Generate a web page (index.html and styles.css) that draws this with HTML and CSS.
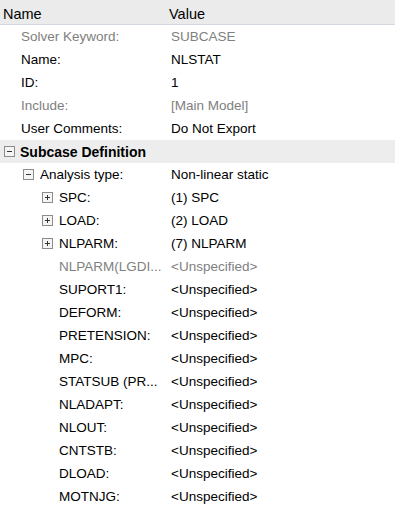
FILE: index.html
```html
<!DOCTYPE html>
<html lang="en">
<head>
    <meta charset="UTF-8">
    <title>Subcase properties</title>
    <link rel="stylesheet" href="styles.css">
</head>
<body>
    <div class="grid">
        <div class="head">
            <div class="cell name">Name</div>
            <div class="cell value">Value</div>
        </div>

        <div class="row dim"><div class="cell name lvl0">Solver Keyword:</div><div class="cell value">SUBCASE</div></div>
        <div class="row"><div class="cell name lvl0">Name:</div><div class="cell value">NLSTAT</div></div>
        <div class="row"><div class="cell name lvl0">ID:</div><div class="cell value">1</div></div>
        <div class="row dim"><div class="cell name lvl0">Include:</div><div class="cell value">[Main Model]</div></div>
        <div class="row"><div class="cell name lvl0">User Comments:</div><div class="cell value">Do Not Export</div></div>

        <div class="row group">
            <div class="cell name grp">
                <svg class="tog" width="11" height="11" viewBox="0 0 11 11"><rect x="0.5" y="0.5" width="10" height="10" fill="#f4f4f4" stroke="#8c8c8c"/><path d="M3 5.5h5" stroke="#333"/></svg>
                Subcase Definition
            </div>
        </div>

        <div class="row">
            <div class="cell name lvl1">
                <svg class="tog" width="11" height="11" viewBox="0 0 11 11"><rect x="0.5" y="0.5" width="10" height="10" fill="#f4f4f4" stroke="#8c8c8c"/><path d="M3 5.5h5" stroke="#333"/></svg>
                <span>Analysis type:</span>
            </div>
            <div class="cell value">Non-linear static</div>
        </div>
        <div class="row">
            <div class="cell name lvl2">
                <svg class="tog" width="11" height="11" viewBox="0 0 11 11"><rect x="0.5" y="0.5" width="10" height="10" fill="#f4f4f4" stroke="#8c8c8c"/><path d="M3 5.5h5M5.5 3v5" stroke="#333"/></svg>
                <span>SPC:</span>
            </div>
            <div class="cell value">(1) SPC</div>
        </div>
        <div class="row">
            <div class="cell name lvl2">
                <svg class="tog" width="11" height="11" viewBox="0 0 11 11"><rect x="0.5" y="0.5" width="10" height="10" fill="#f4f4f4" stroke="#8c8c8c"/><path d="M3 5.5h5M5.5 3v5" stroke="#333"/></svg>
                <span>LOAD:</span>
            </div>
            <div class="cell value">(2) LOAD</div>
        </div>
        <div class="row">
            <div class="cell name lvl2">
                <svg class="tog" width="11" height="11" viewBox="0 0 11 11"><rect x="0.5" y="0.5" width="10" height="10" fill="#f4f4f4" stroke="#8c8c8c"/><path d="M3 5.5h5M5.5 3v5" stroke="#333"/></svg>
                <span>NLPARM:</span>
            </div>
            <div class="cell value">(7) NLPARM</div>
        </div>
        <div class="row dim"><div class="cell name leaf">NLPARM(LGDI...</div><div class="cell value">&lt;Unspecified&gt;</div></div>
        <div class="row"><div class="cell name leaf">SUPORT1:</div><div class="cell value">&lt;Unspecified&gt;</div></div>
        <div class="row"><div class="cell name leaf">DEFORM:</div><div class="cell value">&lt;Unspecified&gt;</div></div>
        <div class="row"><div class="cell name leaf">PRETENSION:</div><div class="cell value">&lt;Unspecified&gt;</div></div>
        <div class="row"><div class="cell name leaf">MPC:</div><div class="cell value">&lt;Unspecified&gt;</div></div>
        <div class="row"><div class="cell name leaf">STATSUB (PR...</div><div class="cell value">&lt;Unspecified&gt;</div></div>
        <div class="row"><div class="cell name leaf">NLADAPT:</div><div class="cell value">&lt;Unspecified&gt;</div></div>
        <div class="row"><div class="cell name leaf">NLOUT:</div><div class="cell value">&lt;Unspecified&gt;</div></div>
        <div class="row"><div class="cell name leaf">CNTSTB:</div><div class="cell value">&lt;Unspecified&gt;</div></div>
        <div class="row"><div class="cell name leaf">DLOAD:</div><div class="cell value">&lt;Unspecified&gt;</div></div>
        <div class="row"><div class="cell name leaf">MOTNJG:</div><div class="cell value">&lt;Unspecified&gt;</div></div>
    </div>
</body>
</html>
```

FILE: styles.css
```css
body {
    margin: 0;
    background-color: #fff;
    color: #000;
    font-family: "Liberation Sans", Arial, sans-serif;
    font-size: 13.5px;
}

.grid {
    width: 395px;
}

.head, .row {
    display: grid;
    grid-template-columns: 165px 1fr;
    height: 23px;
    align-items: center;
}

.head {
    height: 25px;
    background-color: #ebebeb;
    border-bottom: 1px solid #d3d8e0;
    padding-top: 3px;
    box-sizing: border-box;
    font-size: 14.5px;
}

.head .name {
    padding-left: 3px;
}

.head .value {
    padding-left: 4px;
}

.cell {
    white-space: nowrap;
    overflow: hidden;
    display: flex;
    align-items: center;
}

.row .value {
    padding-left: 6px;
}

.dim {
    color: #808080;
}

.group {
    background-color: #ededed;
}

.grp {
    grid-column: 1 / 3;
    padding-left: 4px;
    font-weight: bold;
    font-size: 14px;
}

.grp .tog {
    margin-right: 5px;
}

.lvl0 {
    padding-left: 21px;
}

.lvl1 {
    padding-left: 23px;
}

.lvl2 {
    padding-left: 42px;
}

.tog {
    flex: none;
    margin-right: 6px;
}

.leaf {
    padding-left: 59px;
}
```
